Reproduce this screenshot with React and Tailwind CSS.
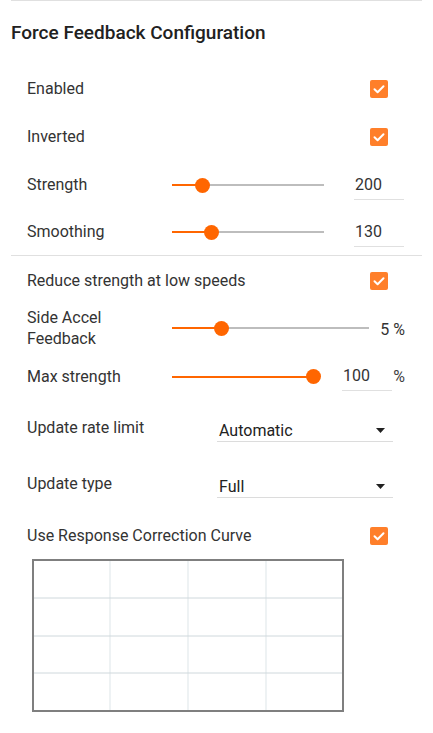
import { useState } from "react";

const Checkbox = ({ checked, onChange }) => (
  <button
    onClick={onChange}
    className={`w-[18px] h-[18px] rounded-[2px] flex items-center justify-center mr-[18px] ${
      checked ? "bg-[#ff7f2a]" : "border-2 border-[#757575] bg-white"
    }`}>
    {checked && (
      <svg width="14" height="14" viewBox="0 0 14 14" fill="none">
        <path
          d="M2.5 7.2 L5.6 10.2 L11.5 4.2"
          stroke="white"
          strokeWidth="2"
          strokeLinecap="round"
          strokeLinejoin="round"
        />
      </svg>
    )}
  </button>
);

// width = track length, pos = thumb center from track start
const Slider = ({ width, pos }) => (
  <div className="relative h-[16px] flex items-center" style={{ width }}>
    <div className="h-[2px] w-full bg-[#bdbdbd]" />
    <div
      className="absolute left-0 h-[2px] bg-[#ff6600]"
      style={{ width: pos }}
    />
    <div
      className="absolute w-[15px] h-[15px] rounded-full bg-[#ff6600]"
      style={{ left: pos - 7.5 }}
    />
  </div>
);

const NumberBox = ({ value, className = "" }) => (
  <div
    className={`h-[29px] w-[50px] border-b border-[#e0e0e0] flex items-center pl-px text-[16px] text-[#333333] ${className}`}>
    {value}
  </div>
);

const Select = ({ value }) => (
  <div className="h-[28px] w-[176px] border-b border-[#dcdcdc] flex items-center justify-between pt-[6px] pl-[2px] pr-[8px] text-[16px] text-[#222222]">
    <span>{value}</span>
    <svg width="9" height="5" viewBox="0 0 9 5">
      <path d="M0 0 L9 0 L4.5 5 Z" fill="#212121" />
    </svg>
  </div>
);

const App = () => {
  const [settings, setSettings] = useState({
    enabled: true,
    inverted: true,
    reduce: true,
    curve: true,
  });

  const toggle = (key) =>
    setSettings((prev) => ({ ...prev, [key]: !prev[key] }));

  return (
    <div className="w-[433px] h-[733px] bg-white font-['Roboto',sans-serif] text-[#333333] overflow-hidden">
      <div className="mx-[11px] border-t border-[#e0e0e0]">
        {/* Title */}
        <h2 className="pt-[20px] pb-[19px] text-[19px] leading-6 font-medium text-[#212121]">
          Force Feedback Configuration
        </h2>

        {/* Basic settings */}
        <div className="px-4 text-[16px] pt-px">
          <div className="h-12 flex items-center justify-between">
            <span>Enabled</span>
            <Checkbox checked={settings.enabled} onChange={() => toggle("enabled")} />
          </div>
          <div className="h-12 flex items-center justify-between">
            <span>Inverted</span>
            <Checkbox checked={settings.inverted} onChange={() => toggle("inverted")} />
          </div>
          <div className="h-12 flex items-center">
            <span className="w-[145px]">Strength</span>
            <Slider width={152} pos={30} />
            <NumberBox value="200" className="ml-[30px]" />
          </div>
          <div className="h-[46px] flex items-center">
            <span className="w-[145px]">Smoothing</span>
            <Slider width={152} pos={39} />
            <NumberBox value="130" className="ml-[30px]" />
          </div>
        </div>

        <div className="border-t border-[#e0e0e0]" />

        {/* Advanced settings */}
        <div className="px-4 text-[16px]">
          <div className="h-12 flex items-center justify-between pt-px">
            <span>Reduce strength at low speeds</span>
            <Checkbox checked={settings.reduce} onChange={() => toggle("reduce")} />
          </div>
          <div className="h-12 flex items-center">
            <span className="w-[145px] leading-[21px]">
              Side Accel
              <br />
              Feedback
            </span>
            <Slider width={197} pos={49} />
            <span className="ml-auto mr-px pt-[3px]">5 %</span>
          </div>
          <div className="h-12 flex items-center pt-px">
            <span className="w-[145px]">Max strength</span>
            <Slider width={141} pos={141} />
            <NumberBox value="100" className="ml-[29px] pl-[2px]" />
            <span className="ml-auto mr-px text-[#424242]">%</span>
          </div>
          <div className="h-14 flex items-center">
            <span className="w-[190px]">Update rate limit</span>
            <Select value="Automatic" />
          </div>
          <div className="h-14 flex items-center">
            <span className="w-[190px]">Update type</span>
            <Select value="Full" />
          </div>
          <div className="h-[47px] flex items-center justify-between">
            <span>Use Response Correction Curve</span>
            <Checkbox checked={settings.curve} onChange={() => toggle("curve")} />
          </div>

          {/* Response curve chart */}
          <div className="ml-[5px] w-[312px] h-[153px]">
            <svg width="312" height="153" viewBox="0 0 312 153">
              <rect x="0" y="0" width="312" height="153" fill="white" />
              {[78, 156, 234].map((x) => (
                <line key={x} x1={x} y1="1" x2={x} y2="152" stroke="#e3e9ec" strokeWidth="1.2" />
              ))}
              {[39, 77, 114].map((y) => (
                <line key={y} x1="1" y1={y} x2="311" y2={y} stroke="#cfd8dc" strokeWidth="1" />
              ))}
              <rect x="1" y="1" width="310" height="151" fill="none" stroke="#7f7f7f" strokeWidth="2" />
            </svg>
          </div>
        </div>
      </div>
    </div>
  );
};

export default App;
